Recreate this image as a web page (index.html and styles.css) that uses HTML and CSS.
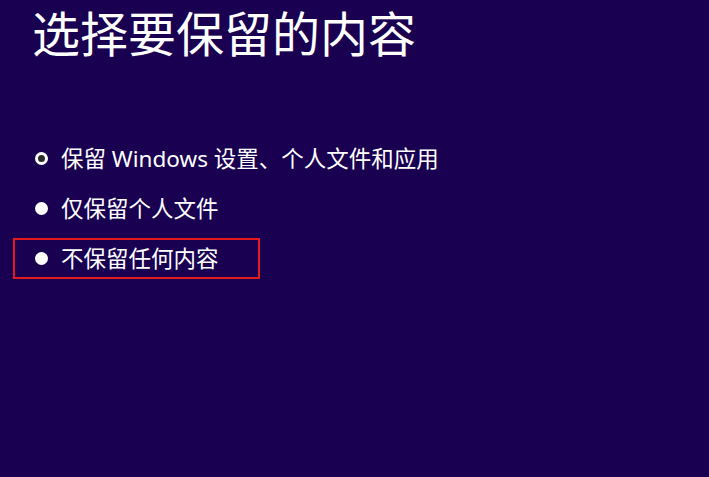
FILE: index.html
```
<!DOCTYPE html>
<html>
<head>
   <meta charset="UTF-8">
   <link rel="stylesheet" href="styles.css">
</head>
<body>

<div id="setup">
    <h1>选择要保留的内容</h1>

    <div class="options">
        <div class="option">
            <span class="radio checked"></span>
            <span class="label">保留 Windows 设置、个人文件和应用</span>
        </div>
        <div class="option">
            <span class="radio"></span>
            <span class="label">仅保留个人文件</span>
        </div>
        <div class="option marked">
            <span class="radio"></span>
            <span class="label">不保留任何内容</span>
        </div>
    </div>
</div>

</body>
</html>
```

FILE: styles.css
```
* {
    padding: 0; margin: 0;
    box-sizing: border-box;
}
html, body {
    height: 100%;
}
body {
    background-color: #190050;
    color: #fff;
    font-family: "Noto Sans", "Noto Sans CJK SC", sans-serif;
}
h1 {
    font-family: "Noto Sans CJK SC", sans-serif;
    font-weight: normal;
    font-size: 48px;
    line-height: 62px;
    padding-left: 32px;
}
div.options {
    display: flex;
    flex-direction: column;
    gap: 9px;
    margin-top: 76px;
    margin-left: 13px;
}
div.option {
    display: flex;
    align-items: center;
    gap: 13px;
    height: 41px;
    width: 247px;
    padding-left: 20px;
    border: 2px solid transparent;
    font-size: 22.5px;
    line-height: 1.2;
    white-space: nowrap;
}
div.marked {
    border-color: #e3191e;
}
span.radio {
    width: 13px;
    height: 13px;
    border-radius: 50%;
    background-color: #fff;
    flex: none;
}
span.checked {
    background-color: #2b2b2b;
    border: 3px solid #fff;
}
```
